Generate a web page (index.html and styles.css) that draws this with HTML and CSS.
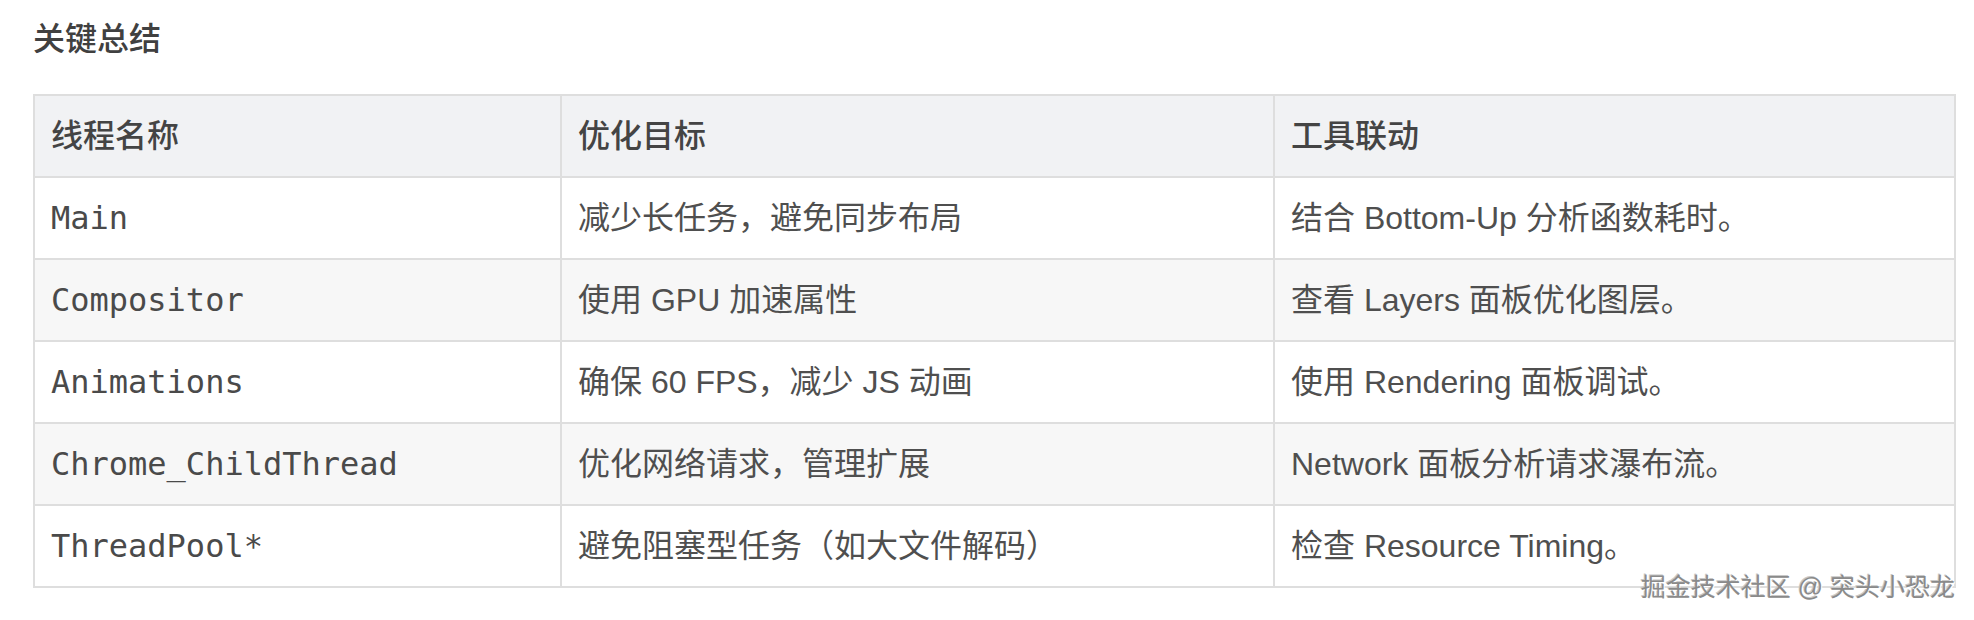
FILE: index.html
```html
<!DOCTYPE html>
<html lang="zh-CN">
<head>
<meta charset="utf-8">
<title>关键总结</title>
<link rel="stylesheet" href="styles.css">
</head>
<body>
<div class="page">
  <h3 class="title">关键总结</h3>
  <table class="summary">
    <colgroup>
      <col class="c1">
      <col class="c2">
      <col class="c3">
    </colgroup>
    <thead>
      <tr><th>线程名称</th><th>优化目标</th><th>工具联动</th></tr>
    </thead>
    <tbody>
      <tr><td><code>Main</code></td><td>减少长任务，避免同步布局</td><td>结合 Bottom-Up 分析函数耗时。</td></tr>
      <tr><td><code>Compositor</code></td><td>使用 GPU 加速属性</td><td>查看 Layers 面板优化图层。</td></tr>
      <tr><td><code>Animations</code></td><td>确保 60 FPS，减少 JS 动画</td><td>使用 Rendering 面板调试。</td></tr>
      <tr><td><code>Chrome_ChildThread</code></td><td>优化网络请求，管理扩展</td><td>Network 面板分析请求瀑布流。</td></tr>
      <tr><td><code>ThreadPool*</code></td><td>避免阻塞型任务（如大文件解码）</td><td>检查 Resource Timing。</td></tr>
    </tbody>
  </table>
  <div class="watermark">掘金技术社区 @ 突头小恐龙</div>
</div>
</body>
</html>
```
FILE: styles.css
```css
html, body {
  margin: 0;
  padding: 0;
  background: #ffffff;
}
.page {
  position: relative;
  width: 1974px;
  height: 620px;
  padding: 19px 0 0 33px;
  box-sizing: border-box;
  font-family: "Liberation Sans", "Noto Sans CJK SC", sans-serif;
  color: #4f4f4f;
}
.title {
  margin: 0;
  font-size: 32px;
  line-height: 40px;
  font-weight: 500;
  color: #404040;
}
.summary {
  margin-top: 35px;
  width: 1923px;
  border-collapse: collapse;
  font-size: 32px;
}
.c1 { width: 527px; }
.c2 { width: 713px; }
.summary th,
.summary td {
  border: 2px solid #dedede;
  padding: 20px 16px;
  line-height: 40px;
  text-align: left;
  vertical-align: middle;
  white-space: nowrap;
}
.summary th {
  background: #f1f2f4;
  font-weight: 500;
  color: #444444;
}
.summary tbody tr:nth-child(even) td {
  background: #f7f7f7;
}
.summary code {
  font-family: "DejaVu Sans Mono", "Liberation Mono", monospace;
  font-size: 32px;
  color: #4a4a4a;
}
.watermark {
  position: absolute;
  right: 19px;
  top: 571px;
  font-family: "Liberation Sans", "Noto Sans CJK SC", sans-serif;
  font-size: 25px;
  line-height: 32px;
  color: #8a8a8a;
  text-shadow: 1px 1px 0 #ffffff, -1px -1px 0 #c8c8c8;
}
```
